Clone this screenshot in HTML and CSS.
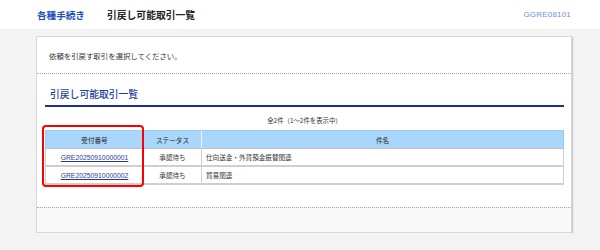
FILE: index.html
```html
<!DOCTYPE html>
<html lang="ja">
<head>
<meta charset="utf-8">
<title>引戻し可能取引一覧</title>
<link rel="stylesheet" href="styles.css">
</head>
<body>
<header class="topbar">
  <div class="crumbs">
    <span class="crumb-cat">各種手続き</span>
    <span class="crumb-title">引戻し可能取引一覧</span>
  </div>
  <span class="screen-id">GGRE08101</span>
</header>
<main class="card">
  <section class="intro">依頼を引戻す取引を選択してください。</section>
  <section class="content">
    <h2 class="section-title">引戻し可能取引一覧</h2>
    <p class="count">全2件（1～2件を表示中）</p>
    <div class="table-wrap">
      <table class="list">
        <thead>
          <tr><th class="c1">受付番号</th><th class="c2">ステータス</th><th class="c3">件名</th></tr>
        </thead>
        <tbody>
          <tr><td class="c1"><a href="#">GRE20250910000001</a></td><td class="c2">承認待ち</td><td class="c3 left">仕向送金・外貨預金振替関連</td></tr>
          <tr><td class="c1"><a href="#">GRE20250910000002</a></td><td class="c2">承認待ち</td><td class="c3 left">貿易関連</td></tr>
        </tbody>
      </table>
      <div class="highlight"></div>
    </div>
  </section>
  <footer class="card-foot"></footer>
</main>
</body>
</html>
```
FILE: styles.css
```css
html, body {
  margin: 0;
  padding: 0;
}
body {
  background: #f3f3f3;
  font-family: "Noto Sans CJK JP", "Noto Sans", sans-serif;
  color: #222;
}
.topbar {
  height: 29px;
  background: #fff;
  display: flex;
  align-items: center;
  justify-content: space-between;
  padding: 0 29px 0 37px;
  box-sizing: border-box;
}
.crumbs {
  display: flex;
  align-items: center;
  gap: 22px;
}
.crumb-cat {
  color: #2050c0;
  font-weight: 700;
  font-size: 9.6px;
}
.crumb-title {
  color: #222;
  font-weight: 700;
  font-size: 9.8px;
}
.screen-id {
  color: #6f8fe0;
  font-family: "Liberation Sans", sans-serif;
  font-size: 8px;
  letter-spacing: 0.2px;
}
.card {
  margin: 7px 28px 0 36px;
  background: #fff;
  border: 1px solid #d8d8d8;
  box-shadow: 1px 1px 1px #c8c8c8;
  display: flex;
  flex-direction: column;
}
.intro {
  height: 37px;
  box-sizing: border-box;
  padding: 0 12px;
  display: flex;
  align-items: center;
  font-size: 7.4px;
  color: #333;
  border-bottom: 1px dotted #aaa;
}
.content {
  padding: 0 7px 22px 8px;
}
.section-title {
  margin: 0;
  padding: 13px 0 4px 5px;
  font-size: 9.8px;
  font-weight: 500;
  color: #1d3d99;
  border-bottom: 2px solid #1b2f9a;
  line-height: 14px;
}
.count {
  margin: 0;
  padding: 9px 0 4px;
  text-align: center;
  font-size: 6.4px;
  line-height: 10px;
  color: #333;
}
.table-wrap {
  position: relative;
}
.list {
  width: 100%;
  border-collapse: collapse;
  font-size: 6.6px;
  table-layout: fixed;
}
.list th {
  background: #a9d6fb;
  height: 17px;
  font-weight: 400;
  color: #222;
  border-left: 1px solid #e8f4ff;
  border-top: 1px solid #9ccaf0;
  border-bottom: 1px solid #c0c0c0;
  padding: 0;
}
.list th:first-child { border-left: 1px solid #9ccaf0; }
.list th:last-child { border-right: 1px solid #9ccaf0; }
.list td {
  height: 16px;
  text-align: center;
  border: 1px solid #d0d0d0;
  border-bottom: 2px solid #cfcfcf;
  padding: 0;
  color: #333;
}
.list td.left {
  text-align: left;
  padding-left: 4px;
}
.c1 { width: 97px; }
.c2 { width: 57px; }
.list a {
  color: #1d3d99;
  text-decoration: underline;
  font-family: "Liberation Sans", sans-serif;
  font-size: 6.8px;
}
.highlight {
  position: absolute;
  left: -3px;
  top: -5px;
  width: 98px;
  height: 58px;
  border: 2.5px solid #ff0000;
  border-radius: 4px;
}
.card-foot {
  height: 24px;
  background: #f9f9f9;
  border-top: 1px dotted #aaa;
}
```
